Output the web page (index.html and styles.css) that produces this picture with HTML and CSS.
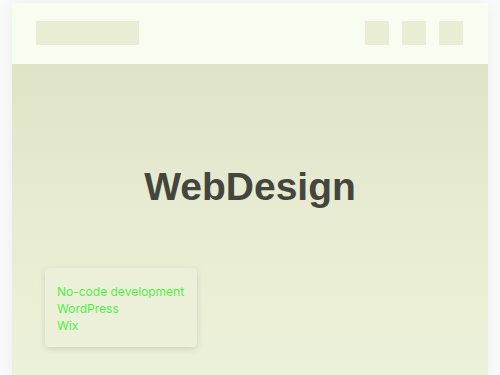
FILE: index.html
```html
<!DOCTYPE html>
<html lang="en">
<head>
    <meta charset="UTF-8">
    <meta name="viewport" content="width=device-width, initial-scale=1.0">
    <title>WebDesign</title>
    <link rel="stylesheet" href="styles.css">
</head>
<body>
    <div class="window">
        <div class="topbar">
            <div class="logo"></div>
            <div class="actions">
                <div class="square"></div>
                <div class="square"></div>
                <div class="square"></div>
            </div>
        </div>
        <div class="hero">
            <h1 class="title">WebDesign</h1>
            <div class="card">
                <p>No-code development</p>
                <p>WordPress</p>
                <p>Wix</p>
            </div>
        </div>
    </div>
</body>
</html>
```

FILE: styles.css
```css
body {
    margin: 0;
    padding: 3px 12px 0;
    background-color: #fafafa;
    font-family: Inter, "Noto Sans", sans-serif;
    height: 375px;
    box-sizing: border-box;
    overflow: hidden;
}
.window {
    height: 372px;
    display: flex;
    flex-direction: column;
    box-shadow: 0 0 16px rgba(0, 0, 0, 0.06);
}
.topbar {
    height: 61px;
    background-color: #f7fdf0;
    display: flex;
    align-items: flex-start;
    justify-content: space-between;
    padding: 18px 25px 0 24px;
    box-sizing: border-box;
}
.logo {
    width: 103px;
    height: 24px;
    background-color: #e8edd3;
}
.actions {
    display: flex;
    gap: 13px;
}
.square {
    width: 24px;
    height: 24px;
    background-color: #e8edd3;
}
.hero {
    flex: 1;
    background: linear-gradient(180deg, #dfe3c8 0%, #e7ecd2 50%, #ecf1d9 100%);
    padding: 99px 0 0 33px;
}
.title {
    margin: 0 0 57px -33px;
    text-align: center;
    font-size: 39px;
    font-weight: 700;
    line-height: 48px;
    color: #44463e;
    font-family: "Liberation Sans", Arial, sans-serif;
}
.card {
    width: 152px;
    box-sizing: border-box;
    padding: 15px 12px 13px;
    background-color: #ecf0d8;
    border-radius: 4px;
    box-shadow: 0 2px 6px rgba(0, 0, 0, 0.12);
}
.card p {
    margin: 0;
    font-size: 12px;
    line-height: 17px;
    color: #4ff046;
}
```
